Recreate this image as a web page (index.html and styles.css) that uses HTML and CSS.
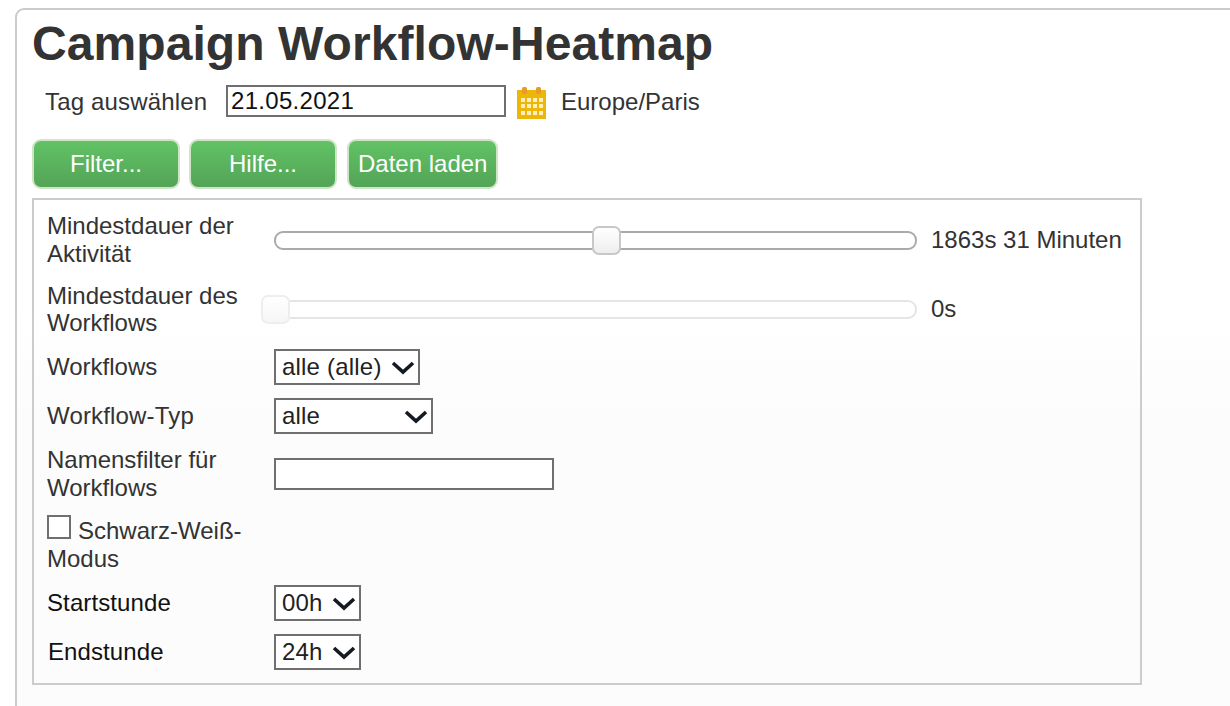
FILE: index.html
```html
<!DOCTYPE html>
<html lang="de">
<head>
<meta charset="utf-8">
<title>Campaign Workflow-Heatmap</title>
<link rel="stylesheet" href="styles.css">
</head>
<body>
<main class="panel">
  <h1 class="title">Campaign Workflow-Heatmap</h1>
  <div class="date-row">
    <label class="date-label" for="day">Tag auswählen</label>
    <input class="date-input" id="day" type="text" value="21.05.2021">
    <svg class="cal" width="30" height="32" viewBox="0 0 30 32" aria-hidden="true">
      <rect x="0" y="3" width="29" height="29" fill="#efb60a"/>
      <rect x="5" y="0" width="5" height="7" rx="1.5" fill="#e89a2c"/>
      <rect x="19" y="0" width="5" height="7" rx="1.5" fill="#e89a2c"/>
      <g fill="#fff0bd">
        <rect x="4" y="11" width="4" height="4"/><rect x="10" y="11" width="4" height="4"/><rect x="16" y="11" width="4" height="4"/><rect x="22" y="11" width="4" height="4"/>
        <rect x="4" y="17" width="4" height="4"/><rect x="10" y="17" width="4" height="4"/><rect x="16" y="17" width="4" height="4"/><rect x="22" y="17" width="4" height="4"/>
        <rect x="4" y="24" width="4" height="4"/><rect x="10" y="24" width="4" height="4"/><rect x="16" y="24" width="4" height="4"/><rect x="22" y="24" width="4" height="4"/>
      </g>
    </svg>
    <span class="tz">Europe/Paris</span>
  </div>
  <div class="buttons">
    <button class="btn btn-wide" type="button">Filter...</button>
    <button class="btn btn-wide" type="button">Hilfe...</button>
    <button class="btn btn-load" type="button">Daten laden</button>
  </div>
  <section class="filters">
    <div class="row row-slider-a">
      <div class="lbl">Mindestdauer der Aktivität</div>
      <div class="slider"><span class="thumb thumb-a"></span></div>
      <div class="val">1863s 31 Minuten</div>
    </div>
    <div class="row row-slider-b">
      <div class="lbl">Mindestdauer des Workflows</div>
      <div class="slider off"><span class="thumb thumb-b"></span></div>
      <div class="val">0s</div>
    </div>
    <div class="row row-sel">
      <div class="lbl">Workflows</div>
      <select class="sel sel-wf"><option>alle (alle)</option></select>
    </div>
    <div class="row row-sel">
      <div class="lbl lbl-wide">Workflow-Typ</div>
      <select class="sel sel-type"><option>alle</option></select>
    </div>
    <div class="row row-name">
      <div class="lbl">Namensfilter für Workflows</div>
      <input class="name-input" type="text">
    </div>
    <div class="row row-check">
      <label class="lbl"><input class="chk" type="checkbox">Schwarz-Weiß-Modus</label>
    </div>
    <div class="row row-sel">
      <div class="lbl lbl-dark">Startstunde</div>
      <select class="sel sel-hour"><option>00h</option></select>
    </div>
    <div class="row row-sel">
      <div class="lbl lbl-dark lbl-end">Endstunde</div>
      <select class="sel sel-hour"><option>24h</option></select>
    </div>
  </section>
</main>
</body>
</html>
```
FILE: styles.css
```css
* { box-sizing: border-box; }
html, body { height: 100%; }
body {
  margin: 0;
  padding: 8px 0 0 15px;
  overflow: hidden;
  background: #fff;
  font-family: "Liberation Sans", Arial, sans-serif;
  font-size: 24px;
  color: #333;
}
.panel {
  width: 1240px;
  height: 720px;
  border: 2px solid #ccc;
  border-radius: 9px;
  padding: 0 0 0 15px;
  background: linear-gradient(#fff 0, #fff 300px, #fcfcfc 400px, #fcfcfc 100%);
}
.title {
  margin: 0;
  height: 68px;
  font-size: 48px;
  line-height: 68px;
  font-weight: bold;
  letter-spacing: 0.08px;
  color: #333;
}
.date-row {
  display: flex;
  align-items: center;
  height: 46px;
  padding-left: 13px;
}
.date-label {
  width: 181px;
  line-height: 32px;
  letter-spacing: 0.17px;
  position: relative;
  top: 1px;
}
.date-input {
  width: 280px;
  height: 32px;
  border: 2px solid #6f6f6f;
  padding: 0 3px 1px;
  font: inherit;
  letter-spacing: 0.3px;
  color: #111;
  background: #fff;
}
.cal { margin: 3px 0 0 11px; }
.tz { margin-left: 14px; position: relative; top: 1px; }
.buttons {
  display: flex;
  gap: 9px;
  margin-top: 15px;
}
.btn {
  width: auto;
  height: 50px;
  padding: 0 9px;
  border: 2px solid #cfe6c6;
  border-radius: 9px;
  background: linear-gradient(#62c265, #53a457);
  color: #fff;
  font: inherit;
}
.btn-wide { width: 148px; }
.btn-load { margin-left: 1px; }
.filters {
  width: 1110px;
  height: 487px;
  margin-top: 9px;
  padding: 12px 12px 0 13px;
  border: 2px solid #ccc;
  display: flex;
  flex-direction: column;
}
.row {
  display: grid;
  grid-template-columns: 227px max-content max-content;
  align-items: center;
  line-height: 28px;
}
.lbl { width: 200px; }
.lbl-wide { letter-spacing: 0.17px; }
.lbl-dark { color: #111; letter-spacing: 0.1px; }
.lbl-end { padding-left: 1px; }
.row-slider-a { height: 56px; }
.row-slider-b { height: 56px; margin-top: 13px; }
.row-slider-b .lbl { line-height: 27px; margin-top: -1px; }
.row-sel { height: 36px; }
.row-slider-b + .row-sel { margin-top: 12px; }
.row-sel + .row-sel { margin-top: 13px; }
.row-name { height: 56px; margin-top: 12px; }
.row-check { height: 58px; margin-top: 13px; }
.row-check + .row-sel { margin-top: 12px; }
.row-check .lbl { width: 227px; display: block; }
.slider {
  position: relative;
  width: 643px;
  height: 19px;
  border: 2px solid #aaa;
  border-radius: 9px;
  background: #fff;
}
.slider.off { border-color: #e5e5e5; }
.thumb {
  position: absolute;
  top: -7px;
  width: 29px;
  height: 29px;
  border: 2px solid #c8c8c8;
  border-radius: 7px;
  background: linear-gradient(#fff, #eee);
}
.thumb-a { left: 316px; }
.thumb-b { left: -15px; border-color: #eee; background: linear-gradient(#fff, #f6f6f6); }
.val { margin-left: 14px; }
.sel {
  appearance: none;
  -webkit-appearance: none;
  height: 36px;
  border: 2px solid #6f6f6f;
  border-radius: 0;
  padding: 0 0 0 6px;
  font: inherit;
  letter-spacing: 0.2px;
  color: #222;
  background: #fff url("data:image/svg+xml,%3Csvg xmlns='http://www.w3.org/2000/svg' width='24' height='15'%3E%3Cpath d='M2 3 L12 12 L22 3' fill='none' stroke='%23141a22' stroke-width='3.6'/%3E%3C/svg%3E") no-repeat right 3px center;
}
.sel-wf { width: 146px; }
.sel-type { width: 159px; }
.sel-hour { width: 87px; }
.name-input {
  width: 280px;
  height: 32px;
  border: 2px solid #6f6f6f;
  background: #fff;
}
.chk {
  appearance: none;
  -webkit-appearance: none;
  width: 24px;
  height: 24px;
  margin: 0 7px 0 0;
  border: 2px solid #6f6f6f;
  background: #fff;
  vertical-align: 0;
}
```
